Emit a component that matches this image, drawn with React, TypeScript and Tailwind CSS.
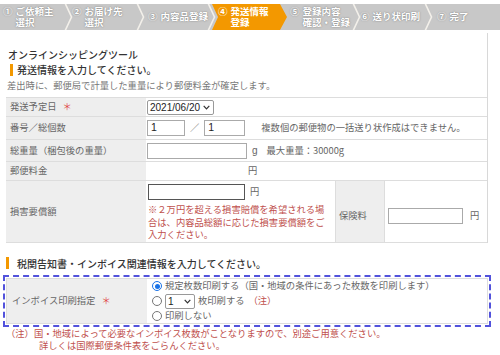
import React from "react";

const Chev = () => (
  <svg className="absolute right-[-5px] top-0 z-10 h-[26px] w-[9px]" viewBox="0 0 9 26">
    <polyline points="1,-1 7.5,13 1,27" fill="none" stroke="#f3f0ea" strokeWidth="1.6" />
  </svg>
);

const stepText = "text-white font-bold text-[9.5px] leading-[11.5px] [text-shadow:0_0_1.5px_#666]";

function Step({ cls, num, lines, last }: { cls: string; num: string; lines: string[]; last?: boolean }) {
  return (
    <div className={`relative flex h-full shrink-0 items-center ${cls}`}>
      <div className={`flex ${stepText}`}>
        <span className="mr-[3px]">{num}</span>
        <div className="flex flex-col">
          {lines.map((l) => (
            <span key={l}>{l}</span>
          ))}
        </div>
      </div>
      {!last && <Chev />}
    </div>
  );
}

function Input({ cls, value, dark }: { cls: string; value?: string; dark?: boolean }) {
  return (
    <div
      className={`flex h-[16px] items-center bg-white pl-[3px] font-['Liberation_Sans',sans-serif] text-[10.5px] text-[#222] ${
        dark ? "border border-[#555]" : "border border-[#aaa]"
      } ${cls}`}
    >
      {value}
    </div>
  );
}

function Select({ cls, value }: { cls: string; value: string }) {
  return (
    <div
      className={`flex h-[15px] items-center justify-between rounded-[2px] border border-[#999] bg-white pl-[2px] pr-[3px] font-['Liberation_Sans',sans-serif] text-[10px] text-[#222] ${cls}`}
    >
      <span>{value}</span>
      <svg width="7" height="5" viewBox="0 0 7 5">
        <polyline points="0.7,0.8 3.5,3.8 6.3,0.8" fill="none" stroke="#333" strokeWidth="1.2" />
      </svg>
    </div>
  );
}

function Radio({ checked }: { checked?: boolean }) {
  return checked ? (
    <span className="flex h-[10px] w-[10px] shrink-0 items-center justify-center rounded-full border-[1.5px] border-[#1a73e8] bg-white">
      <span className="h-[5px] w-[5px] rounded-full bg-[#1a73e8]" />
    </span>
  ) : (
    <span className="h-[10px] w-[10px] shrink-0 rounded-full border border-[#767676] bg-white" />
  );
}

const Req = () => <span className="ml-[6px] text-[#e04646]">＊</span>;

export default function App() {
  return (
    <div className="h-[355px] w-[500px] overflow-hidden bg-white font-['Noto_Sans_CJK_JP',sans-serif] text-[9.3px] text-[#666]">
      {/* step bar */}
      <div className="pt-[4px]">
        <div className="flex h-[26px] bg-[#c8c8c8]">
          <Step cls="w-[68px] pl-[3px]" num="①" lines={["ご依頼主", "選択"]} />
          <Step cls="w-[72px] pl-[4px]" num="②" lines={["お届け先", "選択"]} />
          <Step cls="w-[71px] pl-[8px]" num="③" lines={["内容品登録"]} />
          <div className="relative flex h-full w-[73px] shrink-0 items-center">
            <div className="absolute inset-y-0 left-[1px] right-[-3px] bg-[#f39800] [clip-path:polygon(0_0,calc(100%_-_7px)_0,100%_50%,calc(100%_-_7px)_100%,0_100%,6px_50%)]" />
            <div className="relative flex pl-[7px] text-[9.5px] font-bold leading-[11.5px] text-white">
              <span className="mr-[3px]">④</span>
              <div className="flex flex-col">
                <span>発送情報</span>
                <span>登録</span>
              </div>
            </div>
          </div>
          <Step cls="w-[72px] pl-[6px]" num="⑤" lines={["登録内容", "確認・登録"]} />
          <Step cls="w-[72px] pl-[4px]" num="⑥" lines={["送り状印刷"]} />
          <Step cls="flex-1 pl-[9px]" num="⑦" lines={["完了"]} last />
        </div>
      </div>

      {/* section 1 */}
      <div className="mt-[3px] w-[488px] border-r border-[#d8d8d8] pt-[14px]">
        <div className="h-[15px] pl-[8px] text-[10px] font-medium leading-[15px] text-[#333]">オンラインシッピングツール</div>
        <div className="flex h-[15px] items-center">
          <span className="ml-[10px] h-[12px] w-[3px] bg-[#f39800]" />
          <span className="ml-[4px] text-[10px] font-medium text-[#333]">発送情報を入力してください。</span>
        </div>
        <div className="mt-[1px] h-[15px] pl-[7px] leading-[15px] text-[#777]">
          差出時に、郵便局で計量した重量により郵便料金が確定します。
        </div>

        <div className="ml-[6px] mt-[4px] border-t border-[#ddd]">
          <div className="flex h-[19px] border-b border-[#ddd]">
            <div className="flex w-[140px] items-center bg-[#eee] pl-[4px]">
              発送予定日
              <Req />
            </div>
            <div className="flex items-center pl-[1px]">
              <Select cls="w-[67px]" value="2021/06/20" />
            </div>
          </div>

          <div className="flex h-[23px] border-b border-[#ddd]">
            <div className="flex w-[140px] items-center bg-[#eee] pl-[4px]">番号／総個数</div>
            <div className="flex items-center pl-[1px]">
              <Input cls="w-[38px]" value="1" />
              <span className="mx-[5px] text-[#888]">／</span>
              <Input cls="w-[41px]" value="1" />
              <span className="ml-[16px]">複数個の郵便物の一括送り状作成はできません。</span>
            </div>
          </div>

          <div className="flex h-[22px] border-b border-[#ddd]">
            <div className="flex w-[140px] items-center bg-[#eee] pl-[4px]">総重量（梱包後の重量）</div>
            <div className="flex items-center pl-[1px]">
              <Input cls="w-[100px]" />
              <span className="ml-[5px] font-['Liberation_Sans',sans-serif] text-[10px]">g</span>
              <span className="ml-[9px]">最大重量：30000g</span>
            </div>
          </div>

          <div className="flex h-[19px] border-b border-[#ddd]">
            <div className="flex w-[140px] items-center bg-[#eee] pl-[4px]">郵便料金</div>
            <div className="flex items-center pl-[102px]">円</div>
          </div>

          <div className="flex h-[62px] border-b border-[#ddd]">
            <div className="flex w-[140px] items-center bg-[#eee] pl-[4px]">損害要償額</div>
            <div className="w-[189px] pl-[2px] pt-[3px]">
              <div className="flex items-center">
                <Input cls="w-[97px]" dark />
                <span className="ml-[5px]">円</span>
              </div>
              <div className="mt-[3px] leading-[12.5px] text-[#c0504d]">
                ※２万円を超える損害賠償を希望される場
                <br />
                合は、内容品総額に応じた損害要償額をご
                <br />
                入力ください。
              </div>
            </div>
            <div className="flex w-[50px] items-center border-x border-[#ddd] bg-[#eee] pl-[3px] pt-[8px]">保険料</div>
            <div className="flex items-center pl-[3px] pt-[8px]">
              <Input cls="w-[75px]" />
              <span className="ml-[7px]">円</span>
            </div>
          </div>
        </div>
      </div>

      {/* section 2 */}
      <div className="mt-[13px] flex h-[14px] items-center">
        <span className="ml-[6px] h-[12px] w-[3px] bg-[#f39800]" />
        <span className="ml-[8px] text-[10px] font-medium text-[#333]">
          税関告知書・インボイス関連情報を入力してください。
        </span>
      </div>

      <div className="ml-[3px] mt-[5px] w-[488px] border-2 border-dashed border-[#5252dc] px-[1px] py-[1px]">
        <div className="flex h-[46px] border border-[#ddd]">
          <div className="flex w-[140px] items-center bg-[#eee] pl-[5px]">
            インボイス印刷指定
            <Req />
          </div>
          <div className="flex flex-col justify-center pl-[5px]">
            <div className="flex h-[14px] items-center">
              <Radio checked />
              <span className="ml-[3px]">規定枚数印刷する（国・地域の条件にあった枚数を印刷します）</span>
            </div>
            <div className="flex h-[16px] items-center">
              <Radio />
              <Select cls="ml-[3px] w-[30px]" value="1" />
              <span className="ml-[3px]">枚印刷する</span>
              <span className="ml-[4px] text-[#c0504d]">（注）</span>
            </div>
            <div className="flex h-[14px] items-center">
              <Radio />
              <span className="ml-[3px]">印刷しない</span>
            </div>
          </div>
        </div>
      </div>

      <div className="mt-[1px] pl-[6px] leading-[11.5px] text-[#c0504d]">
        （注）国・地域によって必要なインボイス枚数がことなりますので、別途ご用意ください。
      </div>
      <div className="pl-[39px] leading-[11.5px] text-[#c0504d]">詳しくは国際郵便条件表をごらんください。</div>
    </div>
  );
}
